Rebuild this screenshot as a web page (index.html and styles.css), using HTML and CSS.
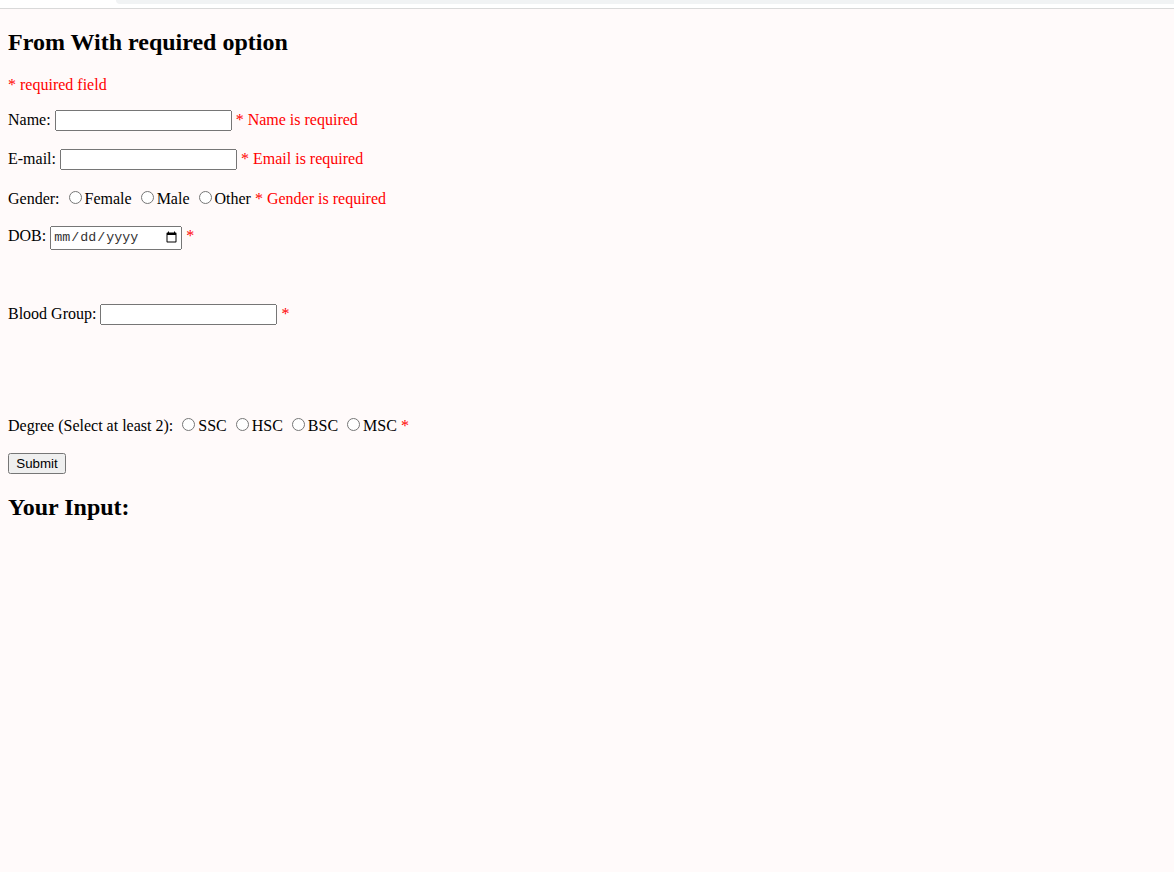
FILE: index.html
```html
<!DOCTYPE html>
<html>
<head>
<meta charset="utf-8">
<title>Form</title>
<link rel="stylesheet" href="styles.css">
</head>
<body>
<div class="chrome"><div class="chrome-tab"></div><div class="chrome-bar"></div></div>
<main class="page">
<h2 class="title">From With required option</h2>
<p><span class="error">* required field</span></p>
<form class="form">
Name: <input type="text" class="field"> <span class="error">* Name is required</span>
<br><br>
E-mail: <input type="text" class="field"> <span class="error">* Email is required</span>
<br><br>
Gender:
<input type="radio" name="gender">Female
<input type="radio" name="gender">Male
<input type="radio" name="gender">Other
<span class="error">* Gender is required</span>
<br><br>
DOB: <input type="date" class="date"> <span class="error">*</span>
<br><br><br><br>
Blood Group: <input type="text" class="field"> <span class="error">*</span>
<br><br><br><br><br><br>
Degree (Select at least 2):
<input type="radio" name="d1">SSC
<input type="radio" name="d2">HSC
<input type="radio" name="d3">BSC
<input type="radio" name="d4">MSC
<span class="error">*</span>
<br><br>
<input type="submit" value="Submit" class="submit">
</form>
<h2 class="title">Your Input:</h2>
</main>
</body>
</html>
```
FILE: styles.css
```css
html, body {
  margin: 0;
  padding: 0;
  background: #fffafa;
}
body {
  font-family: "Liberation Serif", "Times New Roman", serif;
  font-size: 16px;
  color: #000;
}
.chrome {
  height: 8px;
  background: #ffffff;
  border-bottom: 1px solid #d9d9d9;
  display: flex;
}
.chrome-tab {
  width: 116px;
}
.chrome-bar {
  flex: 1;
  height: 4px;
  background: #f1f3f4;
  border-bottom-left-radius: 6px;
}
.page {
  padding: 0 8px;
  display: flow-root;
}
.title {
  font-size: 24px;
  font-weight: bold;
  margin: 19.92px 0;
}
.error {
  color: #ff0000;
}
.field, .submit {
  font-family: "Liberation Sans", Arial, sans-serif;
  font-size: 13.333px;
}
.field {
  box-sizing: border-box;
  width: 177px;
  height: 21px;
}
.date {
  box-sizing: border-box;
  width: 132px;
  height: 24px;
  font-family: "Liberation Mono", "DejaVu Sans Mono", monospace;
  font-size: 13.333px;
  color: #333;
}
.submit {
  width: 58px;
}
```
